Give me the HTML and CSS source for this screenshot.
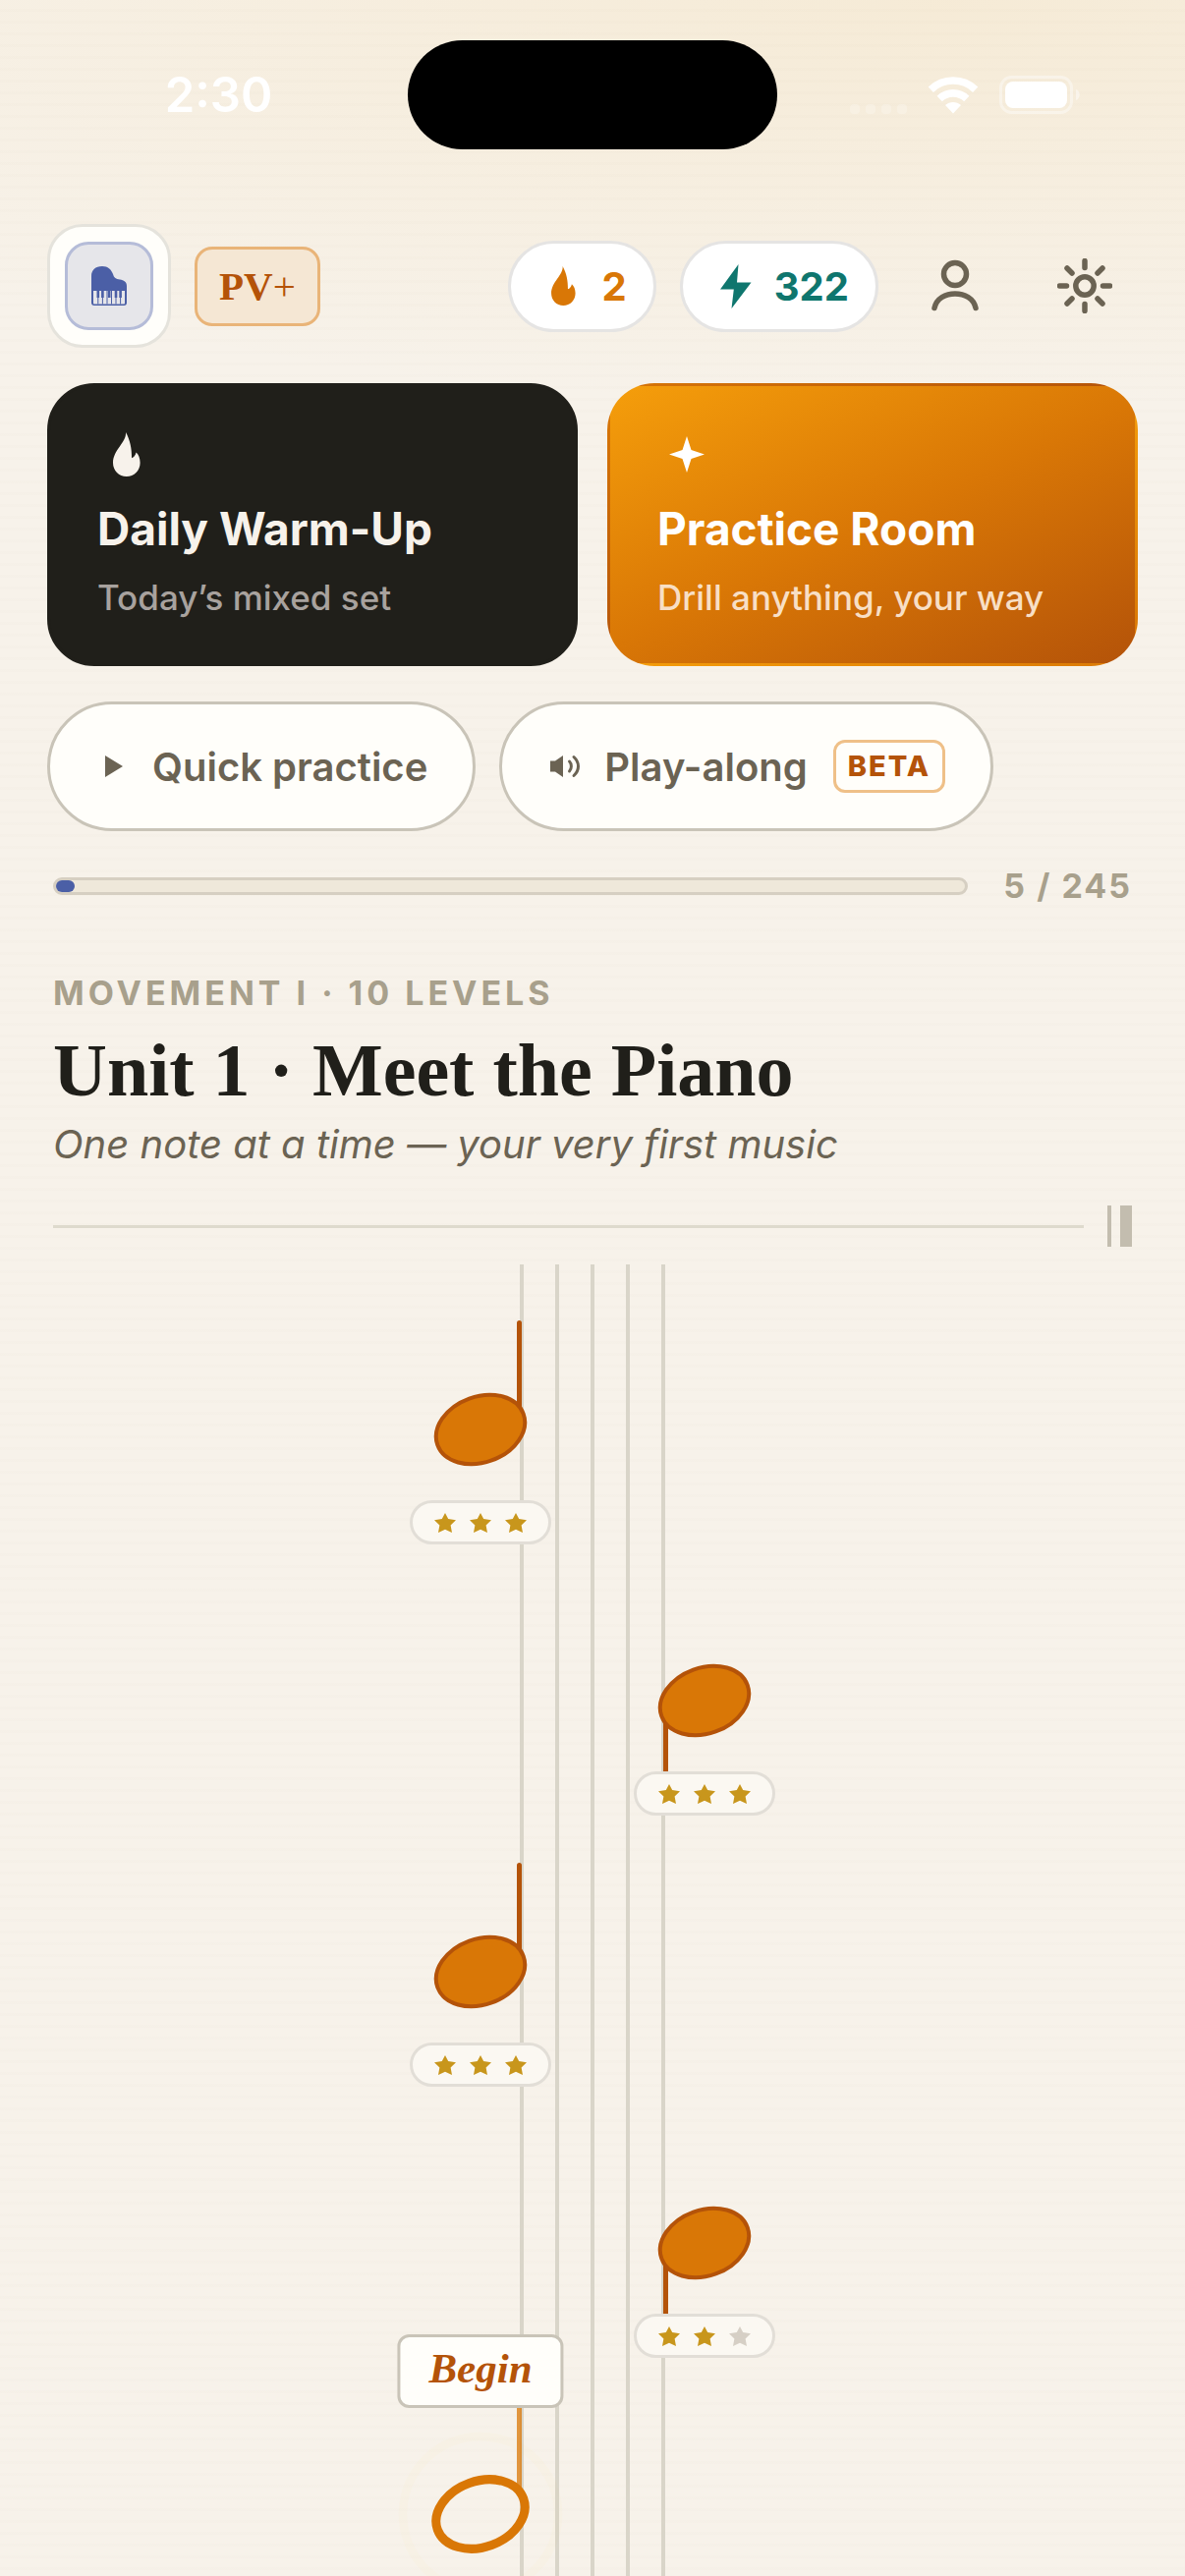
FILE: index.html
```html
<!DOCTYPE html>
<html lang="en">
<head>
    <meta charset="UTF-8" />
    <meta name="viewport" content="width=device-width, initial-scale=1" />
    <title>Unit 1 · Meet the Piano</title>
    <link rel="stylesheet" href="styles.css">
</head>
<body>
    <!-- shared shapes -->
    <svg class="sprite" aria-hidden="true">
        <symbol id="flame" viewBox="0 0 28 45">
            <path d="M13 0C14 10 0 18 0 31C0 39 6 45 13.8 45C21.5 45 27.6 39 27.6 31C27.6 26.5 26 22.5 23.5 20.5C23 23.5 21 25.5 19 26.2C19.2 17 17.5 8 13 0Z" fill="currentColor"/>
        </symbol>
        <symbol id="star" viewBox="0 0 22 20">
            <path d="M11 0L14.2 6L22 7.2L16.6 12.4L18 20L11 16.8L4 20L5.400 12.400L0 7.200L7.800 6Z" fill="currentColor"/>
        </symbol>
        <symbol id="note-up" viewBox="0 0 144 183">
            <path d="M111.5 2.5V92" stroke="#b45309" stroke-width="5" stroke-linecap="round"/>
            <ellipse cx="72" cy="111" rx="46.5" ry="33.5" transform="rotate(-20 72 111)" fill="#d97706" stroke="#b45309" stroke-width="4"/>
        </symbol>
        <symbol id="note-down" viewBox="0 0 144 183">
            <path d="M32.5 132V183" stroke="#b45309" stroke-width="5"/>
            <ellipse cx="72" cy="111" rx="46.5" ry="33.5" transform="rotate(-20 72 111)" fill="#d97706" stroke="#b45309" stroke-width="4"/>
        </symbol>
    </svg>

    <div class="app">
        <div class="status-bar">
            <div class="time">2:30</div>
            <div class="island"></div>
            <div class="status-icons">
                <svg width="58" height="10" viewBox="0 0 58 10" fill="#fff" fill-opacity=".22">
                    <rect width="10" height="10" rx="4"/><rect x="16" width="10" height="10" rx="4"/>
                    <rect x="32" width="10" height="10" rx="4"/><rect x="48" width="10" height="10" rx="4"/>
                </svg>
                <svg width="52" height="38" viewBox="0 0 52 38" fill="none" stroke="#fff" stroke-width="7.6">
                    <path d="M3.3 13.2C16 1 36 1 48.7 13.2"/>
                    <path d="M12.2 22.4C20 15 32 15 39.8 22.4"/>
                    <path d="M26 37.5L18 29C22.5 25 29.5 25 34 29Z" fill="#fff" stroke="none"/>
                </svg>
                <svg width="83" height="39" viewBox="0 0 83 39">
                    <rect x="1.5" y="1.5" width="72" height="36" rx="11" fill="none" stroke="#fff" stroke-opacity=".4" stroke-width="3"/>
                    <rect x="6" y="6" width="63" height="27" rx="8" fill="#fff"/>
                    <path d="M78 14C83 15.5 83 23.5 78 25Z" fill="#fff" fill-opacity=".45"/>
                </svg>
            </div>
        </div>

        <header class="topbar">
            <button class="instrument" aria-label="Choose instrument">
                <span class="instrument-inner">
                    <svg width="36" height="40" viewBox="0 0 36 40">
                        <path d="M0 10C0 4 4 0 11 0C17 0 20 3 22 8C23 12 25 13 29 13.5C33 14 36 16 36 20V37C36 39 35 40 33 40H3C1 40 0 39 0 37Z" fill="#4b5fa6"/>
                        <path d="M2 25H34V37.5C34 38.3 33.5 38.5 33 38.5H3C2.4 38.5 2 38 2 37.5Z" fill="#e6e6ea"/>
                        <path d="M6.8 25V38.5M11.4 25V38.5M16 25V38.5M20.5 25V38.5M25 25V38.5M29.6 25V38.5" stroke="#4b5fa6" stroke-width="1"/>
                        <path d="M6.8 25V32M11.4 25V32M18.2 25V32M25 25V32M29.6 25V32" stroke="#4b5fa6" stroke-width="2.6"/>
                    </svg>
                </span>
            </button>
            <a class="plus-badge" href="#plus">PV<span class="plus-sign">+</span></a>

            <div class="topbar-right">
                <div class="stat stat-streak">
                    <span class="stat-icon"><svg width="25" height="40"><use href="#flame"/></svg></span>2
                </div>
                <div class="stat stat-xp">
                    <span class="stat-icon">
                        <svg width="32" height="45" viewBox="0 0 32 45"><path d="M18.5 0L0 25.5H13.8L11.5 45L31.5 18.5H17Z" fill="currentColor"/></svg>
                    </span>322
                </div>
                <button class="icon-button" aria-label="Profile">
                    <svg width="52" height="54" viewBox="0 0 52 54" fill="none" stroke="currentColor" stroke-width="5.5" stroke-linecap="round">
                        <circle cx="26" cy="15" r="11.5"/>
                        <path d="M5 49.5C9 30 43 30 47 49.5"/>
                    </svg>
                </button>
                <button class="icon-button" aria-label="Settings">
                    <svg width="56" height="56" viewBox="-28 -28 56 56" fill="none" stroke="currentColor" stroke-width="5.5" stroke-linecap="round">
                        <circle r="9.2"/>
                        <path d="M0 -25.5V-18.5M0 18.5V25.5M-25.5 0H-18.5M18.5 0H25.5M-18 -18L-13 -13M13 13L18 18M18 -18L13 -13M-13 13L-18 18"/>
                    </svg>
                </button>
            </div>
        </header>

        <section class="cards">
            <a class="card card-warmup" href="#warm-up">
                <span class="card-icon"><svg width="28" height="45"><use href="#flame"/></svg></span>
                <span class="card-title">Daily Warm-Up</span>
                <span class="card-text">Today’s mixed set</span>
            </a>
            <a class="card card-practice" href="#practice">
                <span class="card-icon">
                    <svg width="36" height="37" viewBox="0 0 36 37"><path d="M18 0L22.5 14L36 18.5L22.5 23L18 37L13.5 23L0 18.5L13.5 14Z" fill="currentColor"/></svg>
                </span>
                <span class="card-title">Practice Room</span>
                <span class="card-text">Drill anything, your way</span>
            </a>
        </section>

        <section class="actions">
            <button class="action">
                <svg width="36" height="36" viewBox="0 0 36 36"><path d="M10 7L28 18L10 29Z" fill="currentColor"/></svg>
                Quick practice
            </button>
            <button class="action">
                <svg width="36" height="36" viewBox="0 0 36 36" fill="none" stroke="currentColor" stroke-width="3" stroke-linecap="round">
                    <path d="M3 12.5H8L16 7V29L8 23.5H3Z" fill="currentColor" stroke="none"/>
                    <path d="M22.5 13C25 15.5 25 20.5 22.5 23M27 8.5C33 14 33 22 27 27.5"/>
                </svg>
                Play-along
                <span class="beta">BETA</span>
            </button>
        </section>

        <div class="progress">
            <div class="progress-track" role="progressbar" aria-label="Levels completed" aria-valuenow="5" aria-valuemin="0" aria-valuemax="245">
                <div class="progress-fill" style="width: 2.04%"></div>
            </div>
            <span class="progress-count">5 / 245</span>
        </div>

        <section class="unit">
            <p class="unit-label">MOVEMENT I · 10 LEVELS</p>
            <h1>Unit 1 · Meet the Piano</h1>
            <p class="unit-text">One note at a time — your very first music</p>
            <div class="unit-rule">
                <div class="rule-line"></div>
                <div class="rule-thin"></div>
                <div class="rule-thick"></div>
            </div>
        </section>

        <main class="staff">
            <a class="level level-left" href="#level-1" aria-label="Level 1">
                <svg class="note"><use href="#note-up"/></svg>
                <span class="stars">
                    <svg><use href="#star"/></svg><svg><use href="#star"/></svg><svg><use href="#star"/></svg>
                </span>
            </a>
            <a class="level level-right" href="#level-2" aria-label="Level 2">
                <svg class="note"><use href="#note-down"/></svg>
                <span class="stars">
                    <svg><use href="#star"/></svg><svg><use href="#star"/></svg><svg><use href="#star"/></svg>
                </span>
            </a>
            <a class="level level-left" href="#level-3" aria-label="Level 3">
                <svg class="note"><use href="#note-up"/></svg>
                <span class="stars">
                    <svg><use href="#star"/></svg><svg><use href="#star"/></svg><svg><use href="#star"/></svg>
                </span>
            </a>
            <a class="level level-right" href="#level-4" aria-label="Level 4">
                <svg class="note"><use href="#note-down"/></svg>
                <span class="stars">
                    <svg><use href="#star"/></svg><svg><use href="#star"/></svg><svg class="star-off"><use href="#star"/></svg>
                </span>
            </a>
            <div class="level level-left">
                <svg class="note note-current" viewBox="0 0 144 183" fill="none">
                    <circle cx="72" cy="111" r="79" stroke="#eab308" stroke-opacity=".02" stroke-width="9"/>
                    <path d="M111.5 0V88" stroke="#d97706" stroke-opacity=".75" stroke-width="5"/>
                    <ellipse cx="72" cy="111" rx="46.5" ry="33.5" transform="rotate(-20 72 111)" stroke="#d97706" stroke-width="9"/>
                </svg>
                <button class="begin">Begin</button>
            </div>
        </main>
    </div>
</body>
</html>
```
FILE: styles.css
```css
* {
    box-sizing: border-box;
}

body {
    margin: 0;
    font-family: Inter, "Noto Sans", sans-serif;
    color: #201f1a;
    background:
        repeating-linear-gradient(transparent 0 9px, rgba(120, 100, 60, 0.012) 9px 12px),
        radial-gradient(120% 420px at 80% 0, rgba(234, 170, 40, 0.1), transparent),
        #f7f2ea;
}

button {
    font: inherit;
    cursor: pointer;
}

a {
    color: inherit;
    text-decoration: none;
}

svg {
    display: block;
    flex: none;
}

.sprite {
    position: absolute;
    width: 0;
    height: 0;
}

.app {
    display: flex;
    flex-direction: column;
    height: 100vh;
    overflow: hidden;
}

/* status bar */
.status-bar {
    display: grid;
    grid-template-columns: 1fr 376px 1fr;
    align-items: center;
    padding-top: 41px;
    color: #fff;
}

.time {
    padding-left: 30px;
    text-align: center;
    font-size: 49px;
    font-weight: 600;
}

.island {
    height: 111px;
    border-radius: 56px;
    background: #000;
}

.status-icons {
    display: flex;
    justify-content: center;
    align-items: flex-end;
    gap: 21px;
    padding-right: 32px;
}

/* top bar */
.topbar {
    display: flex;
    align-items: center;
    gap: 24px;
    padding: 76px 48px 36px;
}

.instrument {
    padding: 15px;
    border: 3px solid #e5e3dc;
    border-radius: 36px;
    background: #fffefa;
}

.instrument-inner {
    display: flex;
    align-items: center;
    justify-content: center;
    width: 90px;
    height: 90px;
    border: 3px solid #b5bcd8;
    border-radius: 24px;
    background: #e6e6ea;
}

.plus-badge {
    display: flex;
    align-items: center;
    height: 81px;
    padding: 0 22px;
    border: 3px solid #e9b478;
    border-radius: 18px;
    background: #f5e7d4;
    color: #b45309;
    font-family: "Liberation Serif", serif;
    font-size: 41px;
    font-weight: 700;
}

.plus-sign {
    font-weight: 400;
}

.topbar-right {
    display: flex;
    align-items: center;
    gap: 24px;
    margin-left: auto;
}

.stat {
    display: flex;
    align-items: center;
    gap: 12px;
    height: 93px;
    padding: 0 27px;
    border: 3px solid #e5e4e3;
    border-radius: 48px;
    background: #fff;
    font-size: 40px;
    font-weight: 700;
}

.stat-streak {
    color: #d97706;
}

.stat-xp {
    color: #0f766e;
}

.stat-icon {
    display: flex;
    justify-content: center;
    width: 54px;
}

.icon-button {
    display: flex;
    align-items: center;
    justify-content: center;
    width: 108px;
    height: 108px;
    padding: 0;
    border: 0;
    background: none;
    color: #6b6353;
}

/* cards */
.cards {
    display: grid;
    grid-template-columns: 1fr 1fr;
    gap: 30px;
    padding: 0 48px;
}

.card {
    display: flex;
    flex-direction: column;
    padding: 39px 48px 45px;
    border: 3px solid transparent;
    border-radius: 48px;
}

.card-warmup {
    border-color: #201f1a;
    background: #201f1a;
    color: #f7f2eb;
}

.card-practice {
    background: linear-gradient(155deg, #f59e0b, #d97706 50%, #b45309);
    color: #fff;
}

.card-icon {
    display: flex;
    align-items: center;
    justify-content: center;
    width: 60px;
    height: 60px;
}

.card-title {
    margin-top: 17px;
    font-size: 46px;
    font-weight: 700;
    line-height: 58px;
}

.card-text {
    margin-top: 19px;
    font-size: 35px;
    font-weight: 500;
    line-height: 44px;
    color: #a8a29e;
}

.card-practice .card-text {
    color: #f8dfc5;
}

/* quick actions */
.actions {
    display: flex;
    gap: 24px;
    padding: 36px 48px 0;
}

.action {
    display: flex;
    align-items: center;
    gap: 22px;
    height: 132px;
    padding: 0 46px;
    border: 3px solid #c9c4b8;
    border-radius: 66px;
    background: #fffefa;
    color: #6b6353;
    font-size: 40px;
    font-weight: 600;
}

.beta {
    margin-left: 4px;
    padding: 0 12px;
    border: 3px solid #efc088;
    border-radius: 12px;
    color: #b45309;
    font-size: 29px;
    font-weight: 800;
    letter-spacing: 2px;
    line-height: 48px;
}

/* progress */
.progress {
    display: flex;
    align-items: center;
    gap: 36px;
    padding: 34px 54px 0;
}

.progress-track {
    flex: 1;
    height: 18px;
    border: 3px solid #d6cfc2;
    border-radius: 9px;
    background: #efe8da;
}

.progress-fill {
    height: 12px;
    border-radius: 6px;
    background: #4b5fa6;
}

.progress-count {
    color: #a8a08c;
    font-size: 34px;
    font-weight: 700;
    letter-spacing: 2px;
    line-height: 44px;
}

/* unit heading */
.unit {
    padding: 67px 54px 0;
}

.unit-label {
    margin: 0;
    color: #a8a08c;
    font-size: 34px;
    font-weight: 700;
    letter-spacing: 4px;
    line-height: 40px;
}

h1 {
    margin: 16px 0 0;
    font-family: "Liberation Serif", serif;
    font-size: 76px;
    font-weight: 700;
    line-height: 84px;
}

.unit-text {
    margin: 8px 0 0;
    color: #6b6353;
    font-size: 40px;
    font-style: italic;
    line-height: 52px;
}

.unit-rule {
    display: flex;
    align-items: center;
    height: 42px;
    margin-top: 36px;
}

.rule-line {
    flex: 1;
    height: 3px;
    margin-right: 24px;
    background: #dedacd;
}

.rule-thin {
    width: 4px;
    height: 42px;
    margin-right: 9px;
    background: #c3bdaf;
}

.rule-thick {
    width: 12px;
    height: 42px;
    background: #c3bdaf;
}

/* level path, drawn on a staff turned upright */
.staff {
    flex: 1;
    display: flex;
    flex-direction: column;
    align-items: center;
    gap: 48px;
    min-height: 0;
    margin-top: 18px;
    padding-top: 57px;
    background: repeating-linear-gradient(90deg, #d9d5c9 0 4px, transparent 4px 36px) center / 148px 100% no-repeat;
}

.level {
    position: relative;
    flex: none;
    width: 144px;
}

.level-left {
    margin-right: 228px;
}

.level-right {
    margin-left: 228px;
}

.note {
    width: 144px;
    height: 183px;
}

.note-current {
    overflow: visible;
}

.stars {
    display: flex;
    align-items: center;
    justify-content: center;
    gap: 14px;
    height: 45px;
    border: 3px solid #e2ded7;
    border-radius: 23px;
    background: #fbf8f2;
    color: #c8961c;
}

.stars svg {
    width: 22px;
    height: 20px;
}

.stars .star-off {
    color: #d6cfc5;
}

.begin {
    position: absolute;
    top: -72px;
    left: 50%;
    height: 75px;
    padding: 0 29px 6px;
    border: 3px solid #c9c4b8;
    border-radius: 12px;
    background: #fffefa;
    color: #b45309;
    font-family: "Liberation Serif", serif;
    font-size: 43px;
    font-style: italic;
    font-weight: 700;
    transform: translateX(-50%);
}
```
